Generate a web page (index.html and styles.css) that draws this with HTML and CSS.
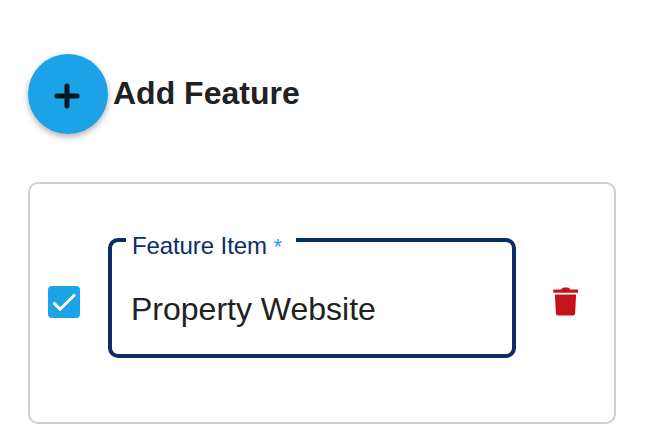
FILE: index.html
```html
<!DOCTYPE html>
<html lang="en">
<head>
    <meta charset="UTF-8">
    <meta name="viewport" content="width=device-width, initial-scale=1.0">
    <title>Features</title>
    <link rel="stylesheet" href="styles.css">
</head>
<body>
    <div class="container">
        <div class="add-row">
            <button class="add" aria-label="Add">
                <svg width="26" height="26" viewBox="0 0 26 26">
                    <path d="M13 3v20M3 13h20" />
                </svg>
            </button>
            <h1>Add Feature</h1>
        </div>

        <div class="feature">
            <div class="checkbox" role="checkbox" aria-checked="true">
                <svg width="32" height="32" viewBox="0 0 32 32">
                    <path d="M5.500 16.600l6.700 6.600L27 8.500" />
                </svg>
            </div>
            <fieldset class="field">
                <legend><span class="label">Feature Item</span> <span class="required">*</span></legend>
                <input type="text" value="Property Website">
            </fieldset>
            <button class="delete" aria-label="Delete">
                <svg width="26" height="30" viewBox="0 0 26 30">
                    <path d="M.3 2.600h7.800Q9.200 .6 11 .6h3.400Q16.300 .6 17.300 2.600h7.800v3.200h-24.800z" />
                    <path d="M1.900 7.500h21.200l-1 18.900q-.2 2.200-2.500 2.200h-14.200q-2.300 0-2.500-2.200z" />
                </svg>
            </button>
        </div>
    </div>
</body>
</html>
```

FILE: styles.css
```css
body {
    font-family: "Liberation Sans", Arial, sans-serif;
    background: #fff;
    color: #212121;
    margin: 0;
}

* {
    box-sizing: border-box;
}

button {
    border: none;
    padding: 0;
    cursor: pointer;
}

svg {
    display: block;
}

.container {
    width: 588px;
    padding-top: 54px;
    margin-left: 28px;
}

.add-row {
    display: flex;
    align-items: center;
    gap: 5px;
    height: 80px;
}

.add {
    display: flex;
    align-items: center;
    justify-content: center;
    width: 80px;
    height: 80px;
    padding: 3px 2px 0 0;
    border-radius: 50%;
    background: #1ca2e6;
    box-shadow: 0 3px 6px rgba(0, 0, 0, 0.3);
}

.add path {
    fill: none;
    stroke: #06151f;
    stroke-width: 5;
    stroke-linecap: round;
}

h1 {
    margin: 0 0 2px;
    font-size: 32px;
    line-height: 40px;
    font-weight: bold;
}

.feature {
    display: flex;
    align-items: center;
    height: 242px;
    margin-top: 48px;
    padding: 0 18px;
    border: 2px solid #d0d0d0;
    border-radius: 10px;
}

.checkbox {
    width: 32px;
    height: 32px;
    border-radius: 4px;
    background: #1ca2e6;
}

.checkbox path {
    fill: none;
    stroke: #fff;
    stroke-width: 3;
}

.field {
    width: 408px;
    height: 120px;
    margin: 0 0 10px 28px;
    padding: 0 20px;
    border: 4px solid #0b2e66;
    border-radius: 10px;
}

.field legend {
    width: 170px;
    height: 4px;
    margin-left: -6px;
    padding: 0 6px;
    line-height: 16px;
    font-size: 24px;
    color: #0b2e66;
    white-space: nowrap;
}

.field .label {
    letter-spacing: -0.1px;
}

.field .required {
    font-size: 22px;
    color: #1ca2e6;
}

.field input {
    display: block;
    width: 100%;
    height: 40px;
    margin: 47px 0 0 -1px;
    padding: 0;
    border: none;
    outline: none;
    background: none;
    font-family: inherit;
    font-size: 32px;
    color: #212121;
}

.feature .checkbox,
.feature .delete {
    margin-bottom: 2px;
}

.delete {
    margin-left: 37px;
    background: none;
}

.delete path {
    fill: #c5121c;
}
```
